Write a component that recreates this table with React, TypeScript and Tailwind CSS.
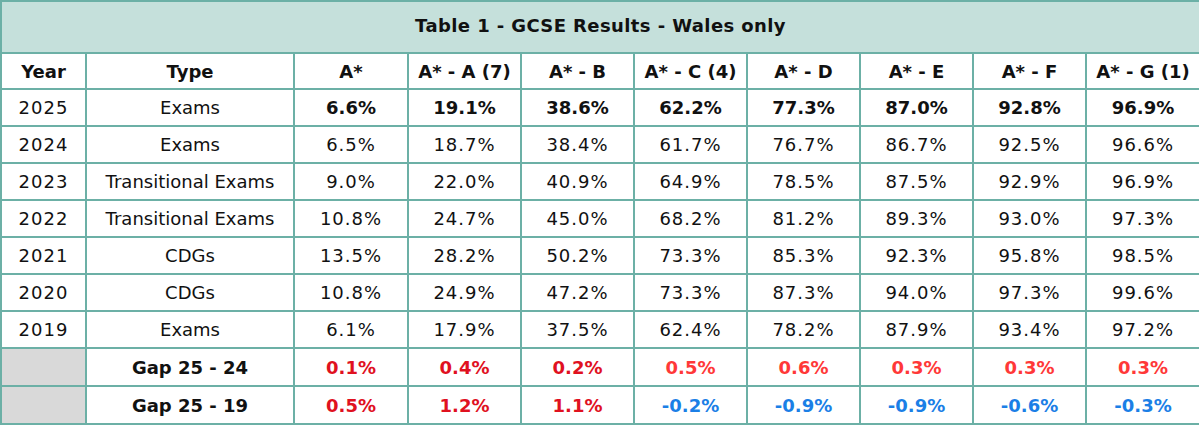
const cols = ["A*", "A* - A (7)", "A* - B", "A* - C (4)", "A* - D", "A* - E", "A* - F", "A* - G (1)"];

const rows: { year: string; type: string; vals: string[] }[] = [
  { year: "2025", type: "Exams", vals: ["6.6%", "19.1%", "38.6%", "62.2%", "77.3%", "87.0%", "92.8%", "96.9%"] },
  { year: "2024", type: "Exams", vals: ["6.5%", "18.7%", "38.4%", "61.7%", "76.7%", "86.7%", "92.5%", "96.6%"] },
  { year: "2023", type: "Transitional Exams", vals: ["9.0%", "22.0%", "40.9%", "64.9%", "78.5%", "87.5%", "92.9%", "96.9%"] },
  { year: "2022", type: "Transitional Exams", vals: ["10.8%", "24.7%", "45.0%", "68.2%", "81.2%", "89.3%", "93.0%", "97.3%"] },
  { year: "2021", type: "CDGs", vals: ["13.5%", "28.2%", "50.2%", "73.3%", "85.3%", "92.3%", "95.8%", "98.5%"] },
  { year: "2020", type: "CDGs", vals: ["10.8%", "24.9%", "47.2%", "73.3%", "87.3%", "94.0%", "97.3%", "99.6%"] },
  { year: "2019", type: "Exams", vals: ["6.1%", "17.9%", "37.5%", "62.4%", "78.2%", "87.9%", "93.4%", "97.2%"] },
];

const gaps: { label: string; vals: string[] }[] = [
  { label: "Gap 25 - 24", vals: ["0.1%", "0.4%", "0.2%", "0.5%", "0.6%", "0.3%", "0.3%", "0.3%"] },
  { label: "Gap 25 - 19", vals: ["0.5%", "1.2%", "1.1%", "-0.2%", "-0.9%", "-0.9%", "-0.6%", "-0.3%"] },
];

// first three grade columns use a deeper red
function gapColour(v: string, i: number) {
  if (v.startsWith("-")) return "text-[#1b7fe6]";
  return i < 3 ? "text-[#e0111f]" : "text-[#ff3838]";
}

const cell = "border-2 border-[#6cb0a6] text-center align-middle p-0 whitespace-nowrap";

export default function App() {
  return (
    <div className="bg-white text-[#111] font-['DejaVu_Sans',sans-serif] text-[18px]">
      <table className="w-[1199px] table-fixed border-collapse">
        <colgroup>
          <col className="w-[85px]" />
          <col className="w-[208px]" />
          <col className="w-[114px]" />
          <col className="w-[113px]" />
          <col className="w-[113px]" />
          <col className="w-[113px]" />
          <col className="w-[113px]" />
          <col className="w-[113px]" />
          <col className="w-[113px]" />
          <col className="w-[114px]" />
        </colgroup>
        <thead>
          <tr className="h-[52px]">
            <th colSpan={10} className={`${cell} bg-[#c5e0db] font-bold tracking-[0.4px] pb-[3px]`}>
              Table 1 - GCSE Results - Wales only
            </th>
          </tr>
          <tr className="h-[36px]">
            <th className={`${cell} font-bold`}>Year</th>
            <th className={`${cell} font-bold`}>Type</th>
            {cols.map((c) => (
              <th key={c} className={`${cell} font-bold`}>
                {c}
              </th>
            ))}
          </tr>
        </thead>
        <tbody>
          {rows.map((r, ri) => (
            <tr key={r.year} className="h-[37px]">
              <td className={`${cell} tracking-[1px]`}>{r.year}</td>
              <td className={cell}>{r.type}</td>
              {r.vals.map((v, i) => (
                <td key={i} className={`${cell} ${ri === 0 ? "font-bold" : "tracking-[1px]"}`}>
                  {v}
                </td>
              ))}
            </tr>
          ))}
          {gaps.map((g) => (
            <tr key={g.label} className="h-[38px]">
              <td className={`${cell} bg-[#d9d9d9]`}></td>
              <td className={`${cell} font-bold`}>{g.label}</td>
              {g.vals.map((v, i) => (
                <td key={i} className={`${cell} font-bold ${gapColour(v, i)}`}>
                  {v}
                </td>
              ))}
            </tr>
          ))}
        </tbody>
      </table>
    </div>
  );
}
